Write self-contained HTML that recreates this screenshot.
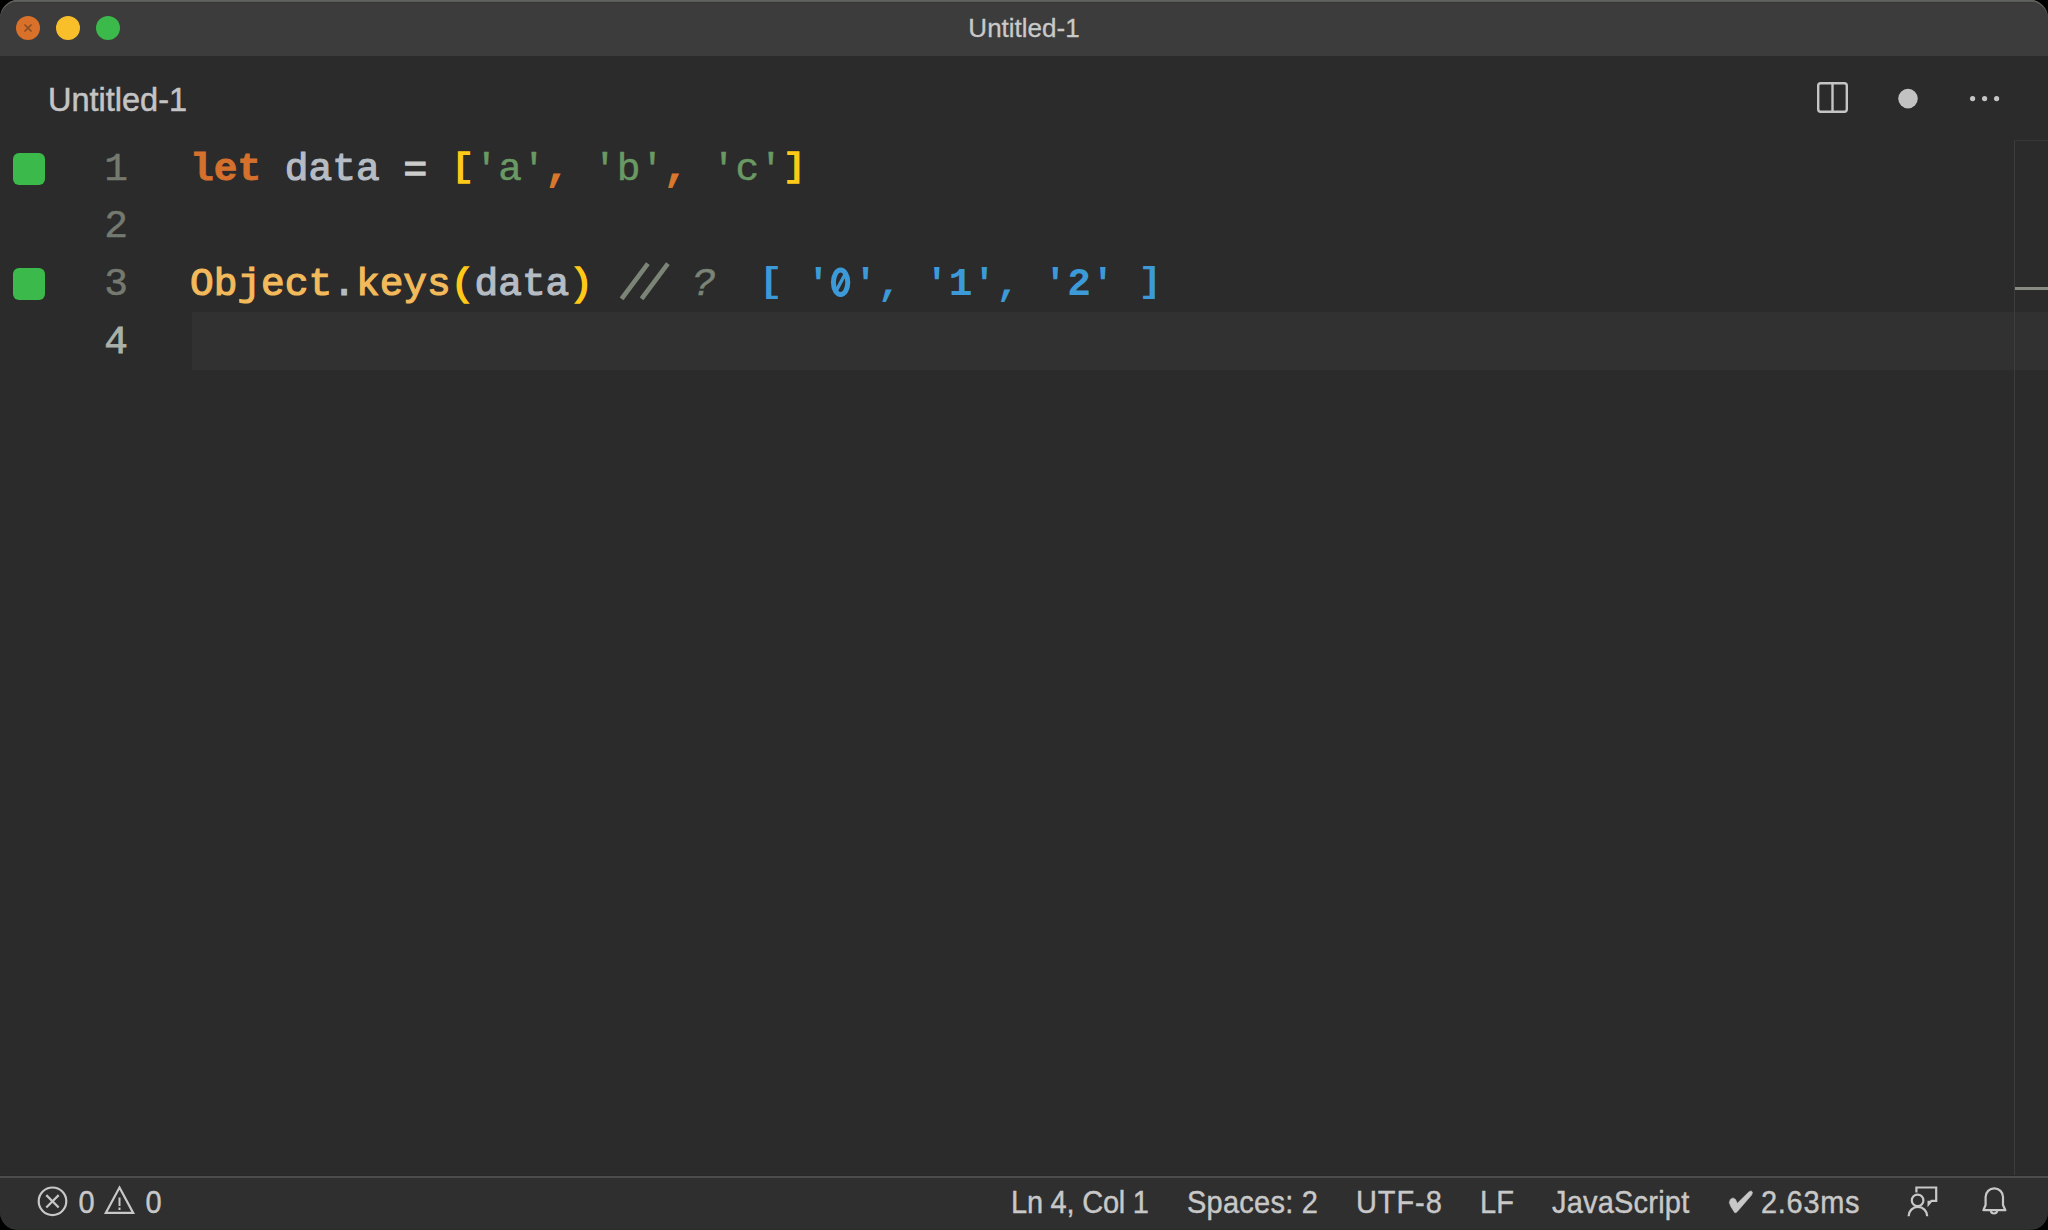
<!DOCTYPE html>
<html><head><meta charset="utf-8">
<style>
html,body{margin:0;padding:0;width:2048px;height:1230px;overflow:hidden;background:#000;}
#win{position:absolute;left:0;top:0;width:2048px;height:1230px;border-radius:18px;overflow:hidden;background:#2b2b2b;}
#title{position:absolute;left:0;top:0;width:2048px;height:56px;background:#3c3c3c;}
#titleborder{position:absolute;left:0;top:0;width:2048px;height:3px;background:linear-gradient(#6a6f65 0,#6a6f65 1px,#575757 1px,#575757 2px,#383838 2px,#383838 3px);}
#corner{position:absolute;left:0;top:0;width:2048px;height:60px;border-radius:18px 18px 0 0;box-shadow:inset 0 1.5px 0 #5f625c;}
.light{position:absolute;width:24px;height:24px;border-radius:50%;top:16px;}
#ttext{position:absolute;left:0;width:2048px;top:0;height:56px;line-height:56px;text-align:center;font-family:"Liberation Sans",sans-serif;font-size:26px;color:#c9c9c9;-webkit-text-stroke:0.3px currentColor;}
#tab{position:absolute;left:48px;top:80px;font-family:"Liberation Sans",sans-serif;font-size:32.5px;color:#c4c4c4;line-height:40px;-webkit-text-stroke:0.5px currentColor;}
.sq{position:absolute;left:13px;width:32px;height:32px;border-radius:6px;background:#3bb94a;}
.ln{position:absolute;left:60px;width:68px;text-align:right;font-family:"Liberation Mono",monospace;font-size:39.5px;line-height:58px;color:#757a70;transform:translateY(2px);-webkit-text-stroke:0.5px currentColor;}
.code{position:absolute;left:190px;font-family:"Liberation Mono",monospace;font-size:39.5px;line-height:58px;white-space:pre;color:#b9c0c7;transform:translateY(2px);-webkit-text-stroke:1.2px currentColor;}
#curline{position:absolute;left:192px;top:312px;width:1856px;height:58px;background:#313131;}
#ruler{position:absolute;left:2014px;top:140px;width:1px;height:1035px;background:#3d3d3d;}
#rulertop{position:absolute;left:2014px;top:140px;width:34px;height:1px;background:#363636;}
#rmark{position:absolute;left:2015px;top:287px;width:33px;height:3px;background:#878b81;}
#status{position:absolute;left:0;top:1175px;width:2048px;height:53px;background:#2f2f2f;border-top:1px solid #282828;}
#statusline{position:absolute;left:0;top:1176px;width:2048px;height:2px;background:#4c4c4c;}
.st{position:absolute;top:1186px;font-family:"Liberation Sans",sans-serif;font-size:29px;line-height:34px;color:#c8c8c8;white-space:pre;-webkit-text-stroke:0.4px currentColor;transform:scaleY(1.05);transform-origin:0 27px;}
.kw{color:#d6712d;font-weight:bold;-webkit-text-stroke:0.8px currentColor;}
.var{color:#b5bcc3;}
.op{color:#cccccc;display:inline-block;transform:translateY(2px);-webkit-text-stroke:1.4px currentColor;}
.br{color:#ffc917;-webkit-text-stroke:1.6px currentColor;display:inline-block;transform:translateY(-2px) scaleY(0.85);transform-origin:50% 28px;}
.ob{display:inline-block;transform:translateY(-2px) scaleY(0.88);transform-origin:50% 28px;}
.par{color:#ffc917;-webkit-text-stroke:1.6px currentColor;}
.str{color:#6a9a64;-webkit-text-stroke:0.5px currentColor;}
.punc{color:#d9772d;-webkit-text-stroke:1.8px currentColor;}
.fn{color:#f2ba5b;}
.cm{color:#7b8476;font-style:italic;-webkit-text-stroke:0.8px currentColor;}
.sl{display:inline-block;-webkit-text-stroke:1.6px currentColor;transform:translate(5px,0px) scale(1.08,1.22);transform-origin:50% 26px;}
.qm{display:inline-block;transform:translateX(4px);-webkit-text-stroke:0.6px currentColor;}
.out{color:#3d9ad8;font-weight:bold;-webkit-text-stroke:0px;}
</style></head>
<body>
<div id="win">
  <div id="title"></div>
  <div id="titleborder"></div>
  <div id="corner"></div>
  <div class="light" style="left:16px;background:#d9712b;"></div>
  <div class="light" style="left:56px;background:#f9bf2b;"></div>
  <div class="light" style="left:96px;background:#3bb94a;"></div>
  <svg style="position:absolute;left:20px;top:20px;" width="16" height="16" viewBox="20 20 16 16"><g stroke="#3a2a20" stroke-width="1.6" opacity="0.5"><line x1="24.5" y1="24.5" x2="31.5" y2="31.5"/><line x1="31.5" y1="24.5" x2="24.5" y2="31.5"/></g></svg>
  <div id="ttext">Untitled-1</div>

  <div id="tab">Untitled-1</div>


  <svg style="position:absolute;left:1800px;top:70px;" width="220" height="60" viewBox="1800 70 220 60">
    <rect x="1818.2" y="83.2" width="28.6" height="28.6" rx="2.5" fill="none" stroke="#c5c5c5" stroke-width="2.4"/>
    <line x1="1832.5" y1="83" x2="1832.5" y2="112" stroke="#c5c5c5" stroke-width="2.4"/>
    <circle cx="1908" cy="98.6" r="9.8" fill="#c2c2c2"/>
    <circle cx="1972.6" cy="98.6" r="2.6" fill="#c5c5c5"/>
    <circle cx="1984.6" cy="98.6" r="2.6" fill="#c5c5c5"/>
    <circle cx="1996.6" cy="98.6" r="2.6" fill="#c5c5c5"/>
  </svg>
  <div id="curline"></div>
  <div id="ruler"></div>
  <div id="rulertop"></div>
  <div id="rmark"></div>

  <div class="sq" style="top:153px;"></div>
  <div class="sq" style="top:268px;"></div>

  <div class="ln" style="top:139px;">1</div>
  <div class="ln" style="top:196px;">2</div>
  <div class="ln" style="top:254px;">3</div>
  <div class="ln" style="top:312px;color:#aab1a9;-webkit-text-stroke:0.8px currentColor;">4</div>

  <div class="code" style="top:139px;"><span class="kw">let</span> <span class="var">data</span> <span class="op">=</span> <span class="br">[</span><span class="str">'a'</span><span class="punc">,</span> <span class="str">'b'</span><span class="punc">,</span> <span class="str">'c'</span><span class="br">]</span></div>
  <div class="code" style="top:254px;"><span class="fn">Object</span><span class="var">.</span><span class="fn">keys</span><span class="par">(</span><span class="var">data</span><span class="par">)</span> <span class="cm">   <span class="qm">?</span></span>  <span class="out"><span class="ob">[</span> ' ', '1', '2' <span class="ob">]</span></span></div>

  <svg style="position:absolute;left:610px;top:258px;" width="70" height="46" viewBox="610 258 70 46"><g stroke="#7b8476" stroke-width="4.6" stroke-linecap="square"><line x1="623" y1="297" x2="646.5" y2="265.5"/><line x1="643" y1="297" x2="666.5" y2="265.5"/></g></svg>
  <svg style="position:absolute;left:825px;top:262px;" width="32" height="40" viewBox="825 262 32 40"><ellipse cx="840.6" cy="282.3" rx="7.2" ry="12.2" fill="none" stroke="#3d9ad8" stroke-width="5"/><line x1="845.2" y1="274" x2="836.4" y2="290.5" stroke="#3d9ad8" stroke-width="3.4"/></svg>
  <div id="status"></div>
  <div id="statusline"></div>
  <svg style="position:absolute;left:0;top:1177px;" width="2048" height="53" viewBox="0 1177 2048 53">
    <g fill="none" stroke="#c8c8c8" stroke-width="2.2">
      <circle cx="52.5" cy="1201.3" r="13.8"/>
      <line x1="46.3" y1="1195.1" x2="58.7" y2="1207.5"/>
      <line x1="58.7" y1="1195.1" x2="46.3" y2="1207.5"/>
      <path d="M119.5 1187.6 L133.2 1212.9 L105.8 1212.9 Z" stroke-linejoin="miter"/>
    </g>
    <line x1="119.5" y1="1197.5" x2="119.5" y2="1206" stroke="#c8c8c8" stroke-width="2"/>
    <line x1="119.5" y1="1207.6" x2="119.5" y2="1210" stroke="#c8c8c8" stroke-width="2"/>
    <path d="M1734.6 1212.5 L1730.8 1206.5 L1729.3 1202.6 L1730.3 1199.4 L1732.9 1197.9 L1735.4 1199.3 L1737.3 1203.3 L1749 1191.8 L1751.3 1190.9 L1752.5 1192.6 L1751.6 1195 L1737.4 1211.4 L1735.9 1212.7 Z" fill="#c8c8c8" stroke="#c8c8c8" stroke-width="0.6" stroke-linejoin="round"/>
    <g fill="none" stroke="#c8c8c8" stroke-width="2.2">
      <circle cx="1917.6" cy="1200.4" r="5.8"/>
      <path d="M1908.6 1216.2 A9.3 9.3 0 0 1 1927.2 1216.2"/>
      <path d="M1916.4 1192.5 L1916.4 1187.5 L1936.2 1187.5 L1936.2 1200.8 L1931.5 1200.8 L1928.6 1204.3 L1928.6 1200.8"/>
      <path d="M1983.4 1210.2 L1985.6 1205 L1985.6 1197 A8.7 8.7 0 0 1 2003 1197 L2003 1205 L2005.4 1210.2 Z" stroke-linejoin="round"/>
      <path d="M1990.8 1211 A3.3 3.3 0 0 0 1997.2 1211"/>
    </g>
  </svg>
  <div class="st" style="left:78.5px;">0</div>
  <div class="st" style="left:145.5px;">0</div>
  <div class="st" style="left:1011px;letter-spacing:-0.23px;">Ln 4, Col 1</div>
  <div class="st" style="left:1187px;letter-spacing:0.25px;">Spaces: 2</div>
  <div class="st" style="left:1356px;letter-spacing:0.9px;">UTF-8</div>
  <div class="st" style="left:1480px;">LF</div>
  <div class="st" style="left:1552px;letter-spacing:0.2px;">JavaScript</div>
  <div class="st" style="left:1761px;letter-spacing:0.7px;">2.63ms</div>
</div>
</body></html>
